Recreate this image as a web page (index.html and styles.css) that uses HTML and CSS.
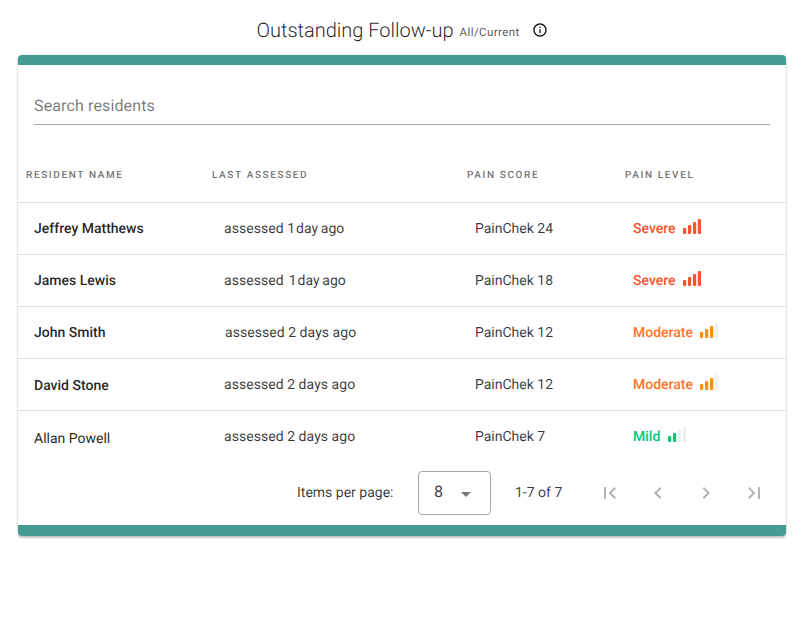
FILE: index.html
```html
<!DOCTYPE html>
<html lang="en">
<head>
<meta charset="utf-8">
<title>Outstanding Follow-up</title>
<link rel="stylesheet" href="styles.css">
</head>
<body>
<header class="heading">
  <h1 class="title">Outstanding Follow-up</h1>
  <span class="subtitle">All/Current</span>
  <svg class="info" viewBox="0 0 24 24" width="16" height="16"><path d="M11 7h2v2h-2zm0 4h2v6h-2zm1-9C6.48 2 2 6.48 2 12s4.48 10 10 10 10-4.48 10-10S17.52 2 12 2zm0 18c-4.41 0-8-3.59-8-8s3.59-8 8-8 8 3.59 8 8-3.59 8-8 8z"/></svg>
</header>
<main class="card">
  <div class="band"></div>
  <div class="search"><span class="search-text">Search residents</span></div>
  <div class="row head">
    <div>RESIDENT NAME</div><div>LAST ASSESSED</div><div>PAIN SCORE</div><div>PAIN LEVEL</div>
  </div>
  <div class="row body">
    <div class="name">Jeffrey Matthews</div><div class="when">assessed <span class="ago"><span class="one">1</span> day ago</span></div><div class="score">PainChek 24</div>
    <div class="level severe">Severe <svg class="bars" width="18" height="15" viewBox="0 0 18 15"><rect class="on" x="0" y="9" width="3.2" height="6" rx="1"/><rect class="on" x="5" y="6" width="3.2" height="9" rx="1"/><rect class="on" x="10" y="3" width="3.2" height="12" rx="1"/><rect class="on" x="14.8" y="0" width="3.2" height="15" rx="1"/></svg></div>
  </div>
  <div class="row body">
    <div class="name">James Lewis</div><div class="when">assessed <span class="ago wide"><span class="one">1</span> day ago</span></div><div class="score">PainChek 18</div>
    <div class="level severe">Severe <svg class="bars" width="18" height="15" viewBox="0 0 18 15"><rect class="on" x="0" y="9" width="3.2" height="6" rx="1"/><rect class="on" x="5" y="6" width="3.2" height="9" rx="1"/><rect class="on" x="10" y="3" width="3.2" height="12" rx="1"/><rect class="on" x="14.8" y="0" width="3.2" height="15" rx="1"/></svg></div>
  </div>
  <div class="row body">
    <div class="name">John Smith</div><div class="when shift">assessed 2 days ago</div><div class="score">PainChek 12</div>
    <div class="level moderate">Moderate <svg class="bars" width="18" height="15" viewBox="0 0 18 15"><rect class="on" x="0" y="9" width="3.2" height="6" rx="1"/><rect class="on" x="5" y="6" width="3.2" height="9" rx="1"/><rect class="on" x="10" y="3" width="3.2" height="12" rx="1"/><rect class="off" x="14.8" y="0" width="3.2" height="15" rx="1"/></svg></div>
  </div>
  <div class="row body">
    <div class="name low1">David Stone</div><div class="when">assessed 2 days ago</div><div class="score">PainChek 12</div>
    <div class="level moderate">Moderate <svg class="bars" width="18" height="15" viewBox="0 0 18 15"><rect class="on" x="0" y="9" width="3.2" height="6" rx="1"/><rect class="on" x="5" y="6" width="3.2" height="9" rx="1"/><rect class="on" x="10" y="3" width="3.2" height="12" rx="1"/><rect class="off" x="14.8" y="0" width="3.2" height="15" rx="1"/></svg></div>
  </div>
  <div class="row body last">
    <div class="name plain low2">Allan Powell</div><div class="when">assessed 2 days ago</div><div class="score">PainChek 7</div>
    <div class="level mild">Mild <svg class="bars" width="18" height="15" viewBox="0 0 18 15"><rect class="on" x="0" y="9" width="3.2" height="6" rx="1"/><rect class="on" x="5" y="6" width="3.2" height="9" rx="1"/><rect class="off" x="10" y="3" width="3.2" height="12" rx="1"/><rect class="off" x="14.8" y="0" width="3.2" height="15" rx="1"/></svg></div>
  </div>
  <div class="pager">
    <span class="pager-label">Items per page:</span>
    <div class="select"><span class="select-value">8</span><i class="caret"></i></div>
    <span class="range">1-7 of 7</span>
    <div class="nav">
      <svg viewBox="0 0 24 24" width="24" height="24"><path d="M6 6h2v12H6zM18 7.41 16.59 6l-6 6 6 6L18 16.59 13.42 12z"/></svg>
      <svg viewBox="0 0 24 24" width="24" height="24"><path d="M15.41 7.41 14 6l-6 6 6 6 1.41-1.41L10.83 12z"/></svg>
      <svg viewBox="0 0 24 24" width="24" height="24"><path d="M10 6 8.59 7.41 13.17 12l-4.58 4.59L10 18l6-6z"/></svg>
      <svg viewBox="0 0 24 24" width="24" height="24"><path d="M6 7.41 7.41 6l6 6-6 6L6 16.59 10.58 12zM16 6h2v12h-2z"/></svg>
    </div>
  </div>
  <div class="band bottom"></div>
</main>
</body>
</html>
```
FILE: styles.css
```css
* { box-sizing: border-box; }
html, body { margin: 0; background: #fff; }
body { font-family: Roboto, "Liberation Sans", sans-serif; color: rgba(0,0,0,.87); width: 803px; height: 617px; overflow: hidden; text-rendering: geometricPrecision; }
.heading { height: 55px; display: flex; justify-content: center; align-items: center; padding: 4px 0 0 1px; }
.title { margin: 0; font-size: 20px; font-weight: 300; line-height: 24px; }
.subtitle { font-size: 11.5px; font-weight: 400; margin: 4px 0 0 6px; color: rgba(0,0,0,.7); letter-spacing: .4px; }
.info { margin-left: 12px; fill: #111; }
.card { margin: 0 17px 0 18px; height: 481px; border-radius: 4px; background: #fff; overflow: hidden; box-shadow: 0 2px 2px rgba(0,0,0,.2), 0 0 3px rgba(0,0,0,.14); display: flex; flex-direction: column; }
.band { height: 10px; background: #459c94; flex: none; }
.band.bottom { height: 11px; }
.search { margin: 0 16px; height: 60px; padding-top: 31px; border-bottom: 1px solid #a6a6a6; flex: none; }
.search-text { font-size: 16px; line-height: 19px; color: rgba(0,0,0,.54); letter-spacing: .13px; display: block; }
.row { display: grid; grid-template-columns: 186px 255px 158px 1fr; flex: none; }
.head { height: 78px; padding: 44px 0 0 8px; font-size: 10px; font-weight: 500; letter-spacing: 1.62px; color: #757575; line-height: 13px; border-bottom: 1px solid #e0e0e0; }
.body { height: 52px; padding-left: 8px; border-bottom: 1px solid #e0e0e0; font-size: 14px; line-height: 16px; align-items: start; padding-top: 18px; }
.body.last { border-bottom: 0; height: 50px; }
.name { padding-left: 8px; font-weight: 500; }
.name.plain { font-weight: 400; }
.low1 { padding-top: 1px; }
.low2 { padding-top: 2px; }
.when { padding-left: 12px; letter-spacing: .05px; color: rgba(0,0,0,.78); }
.when.shift { padding-left: 13px; }
.ago { word-spacing: -1px; }
.ago.wide { margin-left: 1.5px; }
.one { letter-spacing: -1.5px; }
.score { padding-left: 8px; color: rgba(0,0,0,.78); }
.level { padding-left: 8px; font-weight: 500; display: flex; align-items: flex-start; gap: 7.5px; height: 16px; }
.bars { flex: none; margin-top: -2px; }
.severe { color: #f4552a; }
.severe .on { fill: #f4552a; }
.moderate { color: #ff7429; }
.moderate .on { fill: #ff8f00; }
.mild { color: #00c875; }
.mild .on { fill: #00c875; }
.off { fill: #eeeeee; }
.pager { flex: 1; display: flex; align-items: center; font-size: 14px; padding-left: 279px; color: rgba(0,0,0,.78); }
.pager-label { width: 121px; font-size: 14px; }
.select { width: 73px; height: 44px; border: 1px solid #a6a6a6; border-radius: 4px; display: flex; align-items: center; justify-content: space-between; padding: 0 19px 0 15px; font-size: 16px; }
.select-value { margin-top: -3px; }
.caret { width: 0; height: 0; border-left: 5px solid transparent; border-right: 5px solid transparent; border-top: 5px solid #757575; margin-top: 2px; }
.range { margin-left: 24px; width: 83px; font-size: 14px; }
.nav { display: flex; gap: 24px; }
.nav svg { fill: #b3b3b3; display: block; }
```
